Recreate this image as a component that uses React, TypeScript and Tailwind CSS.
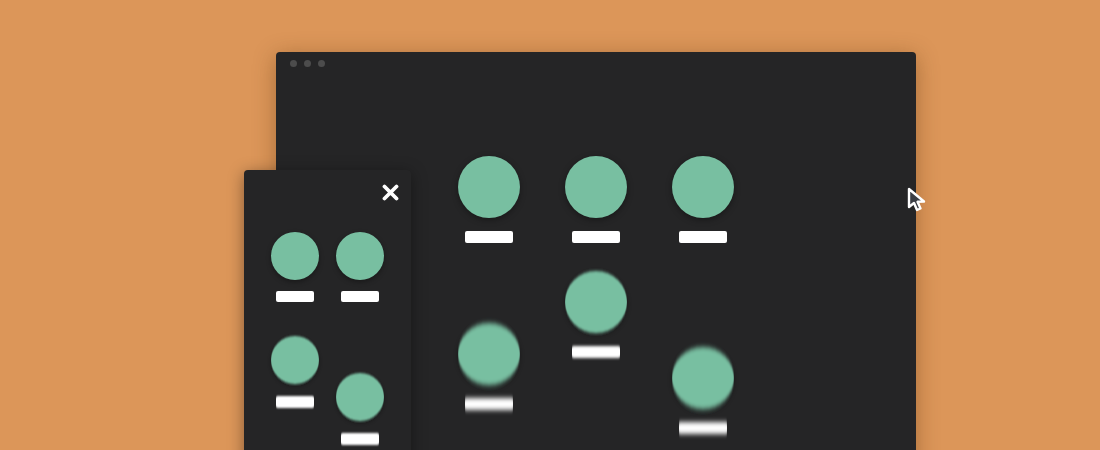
function Big({ blur = 0, className = "" }: { blur?: 0 | 1 | 2 | 3; className?: string }) {
  const f = blur === 3 ? "[filter:url(#by3)]" : blur === 2 ? "[filter:url(#by2)]" : blur === 1 ? "[filter:url(#by1)]" : "";
  return (
    <div className={`flex flex-col items-center ${className}`}>
      <div className={`w-[62px] h-[62px] rounded-full bg-[#78bfa1] shadow-[0_2px_6px_rgba(0,0,0,0.35)] ${f}`} />
      <div className={`w-[48px] h-[12px] mt-[13px] rounded-[2px] bg-white ${f}`} />
    </div>
  );
}

function Small({ blur = 0, className = "" }: { blur?: 0 | 1; className?: string }) {
  const f = blur === 1 ? "[filter:url(#by1)]" : "";
  const bar = blur === 1 ? "h-[12px] mt-[12px]" : "h-[11px] mt-[11px]";
  return (
    <div className={`flex flex-col items-center ${className}`}>
      <div className={`w-[48px] h-[48px] rounded-full bg-[#78bfa1] shadow-[0_2px_5px_rgba(0,0,0,0.35)] ${f}`} />
      <div className={`w-[38px] rounded-[2px] bg-white ${bar} ${f}`} />
    </div>
  );
}

export default function App() {
  return (
    <div className="relative w-[1100px] h-[450px] overflow-hidden bg-[#dc9659]">
      <svg width="0" height="0" className="absolute">
        <defs>
          <filter id="by1" x="-10%" y="-30%" width="120%" height="160%">
            <feGaussianBlur stdDeviation="0 1" />
          </filter>
          <filter id="by2" x="-10%" y="-40%" width="120%" height="180%">
            <feGaussianBlur stdDeviation="0 1.5" />
          </filter>
          <filter id="by3" x="-10%" y="-50%" width="120%" height="200%">
            <feGaussianBlur stdDeviation="0 2.4" />
          </filter>
        </defs>
      </svg>

      {/* Large window */}
      <div className="absolute left-[276px] top-[52px] w-[640px] h-[460px] rounded-[4px] bg-[#252526] shadow-[0_4px_22px_rgba(90,50,10,0.4)]">
        <div className="flex gap-[7px] pl-[14px] pt-[8px]">
          <div className="w-[7px] h-[7px] rounded-full bg-[#4c4c4c]" />
          <div className="w-[7px] h-[7px] rounded-full bg-[#4c4c4c]" />
          <div className="w-[7px] h-[7px] rounded-full bg-[#4c4c4c]" />
        </div>
        <div className="flex gap-[45px] pl-[182px] pt-[89px]">
          <div className="flex flex-col">
            <Big />
            <Big blur={3} className="mt-[80px]" />
          </div>
          <div className="flex flex-col">
            <Big />
            <Big blur={2} className="mt-[28px]" />
          </div>
          <div className="flex flex-col">
            <Big />
            <Big blur={3} className="mt-[104px]" />
          </div>
        </div>
      </div>

      {/* Small window */}
      <div className="absolute left-[244px] top-[170px] w-[167px] h-[300px] rounded-[4px] bg-[#252526] shadow-[0_3px_16px_rgba(0,0,0,0.4)]">
        <div className="flex justify-end pt-[14px] pr-[12px]">
          <svg width="17" height="17" viewBox="0 0 17 17">
            <path d="M2.5 2.5 L14.5 14.5 M14.5 2.5 L2.5 14.5" stroke="#ffffff" strokeWidth="3.8" strokeLinecap="round" />
          </svg>
        </div>
        <div className="flex gap-[17px] pl-[27px] pt-[31px]">
          <div className="flex flex-col">
            <Small />
            <Small blur={1} className="mt-[34px]" />
          </div>
          <div className="flex flex-col">
            <Small />
            <Small blur={1} className="mt-[71px]" />
          </div>
        </div>
      </div>

      {/* Cursor */}
      <svg className="absolute left-[906px] top-[186px]" width="22" height="28" viewBox="0 0 22 28">
        <path
          d="M3 3 L3 21 L8 17 L11 24 L14.5 22.5 L11.5 15.8 L18 15.5 Z"
          fill="#3a3d44"
          stroke="#ffffff"
          strokeWidth="2.4"
          strokeLinejoin="round"
        />
      </svg>
    </div>
  );
}
